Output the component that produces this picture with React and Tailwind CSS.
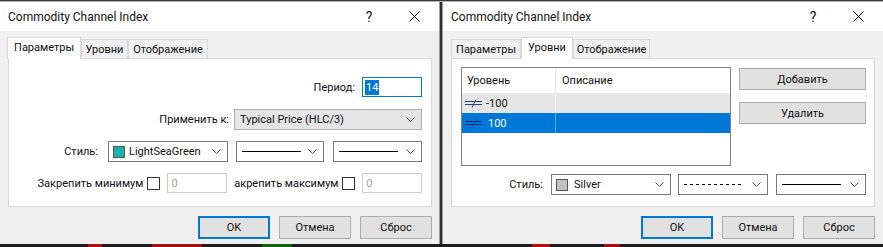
import React from "react";

function Chevron() {
  return (
    <svg width="9" height="5" viewBox="0 0 9 5" className="shrink-0">
      <path d="M0.5 0.5L4.5 4.5L8.5 0.5" fill="none" stroke="#555" strokeWidth="1" />
    </svg>
  );
}

function Select({ width, gray, children }) {
  return (
    <div
      className={`${width} h-[21px] flex items-center border pl-[4px] pr-[6px] ${
        gray ? "bg-[#e5e5e5] border-[#adadad]" : "bg-white border-[#7a7a7a]"
      }`}
    >
      <div className="flex-1 flex items-center min-w-0 whitespace-nowrap">{children}</div>
      <Chevron />
    </div>
  );
}

function Swatch({ color }) {
  return <span className={`w-[12px] h-[12px] border border-[#555] mr-[4px] shrink-0 ${color}`} />;
}

function SolidLine() {
  return <div className="w-[59px] h-px bg-black ml-[1px]" />;
}

function DashedLine() {
  return (
    <svg width="60" height="3" className="ml-[1px]">
      <line x1="0" y1="1.5" x2="60" y2="1.5" stroke="#000" strokeWidth="1" strokeDasharray="3 3" />
    </svg>
  );
}

function Checkbox() {
  return <div className="w-[13px] h-[13px] border border-[#333] bg-white shrink-0" />;
}

function Button({ children, primary }) {
  return (
    <div
      className={`h-[23px] w-[72px] flex items-center justify-center bg-[#e1e1e1] ${
        primary ? "border-2 border-[#0078d7]" : "border border-[#adadad]"
      }`}
    >
      {children}
    </div>
  );
}

function Tab({ label, selected, width }) {
  return selected ? (
    <div className={`${width} h-[22px] bg-white border border-b-0 border-[#d9d9d9] flex items-center justify-center pb-[2px]`}>
      {label}
    </div>
  ) : (
    <div className={`${width} h-[19px] mb-[1px] bg-[#f0f0f0] border border-b-0 border-[#d9d9d9] flex items-center justify-center`}>
      {label}
    </div>
  );
}

function Dialog({ className, tabs, children }) {
  return (
    <div className={`h-[242px] flex flex-col bg-[#f0f0f0] ${className}`}>
      <div className="h-[29px] bg-white flex items-center shrink-0">
        <span className="pl-[8px] flex-1 text-[12px]">Commodity Channel Index</span>
        <span className="w-[40px] text-center text-[14px] leading-none">?</span>
        <div className="w-[50px] flex justify-center">
          <svg width="11" height="11" viewBox="0 0 11 11">
            <path d="M0.5 0.5L10.5 10.5M10.5 0.5L0.5 10.5" stroke="#000" strokeWidth="1" />
          </svg>
        </div>
      </div>
      <div className="flex-1 flex flex-col pt-[6px] pl-[8px]">
        <div className="flex items-end h-[22px] -mb-px relative z-10">{tabs}</div>
        <div className="w-[424px] h-[149px] bg-white border border-[#d9d9d9]">{children}</div>
        <div className="w-[424px] flex justify-end gap-[9px] mt-[9px]">
          <Button primary>OK</Button>
          <Button>Отмена</Button>
          <Button>Сброс</Button>
        </div>
      </div>
    </div>
  );
}

function LevelIcon({ light }) {
  const c = light ? "#1b2a6b" : "#2b3a8a";
  return (
    <svg width="18" height="9" viewBox="0 0 18 9" className="shrink-0">
      <line x1="0" y1="2.5" x2="17" y2="2.5" stroke={c} strokeWidth="1" />
      <line x1="0" y1="5.5" x2="17" y2="5.5" stroke={c} strokeWidth="1" />
      <line x1="7" y1="8.5" x2="11" y2="0.5" stroke={c} strokeWidth="1" opacity={light ? 0.5 : 1} />
    </svg>
  );
}

function ParamsPanel() {
  return (
    <div className="flex flex-col pt-[18px] pr-[9px]">
      <div className="flex items-center justify-end h-[20px]">
        <span className="mr-[7px]">Период:</span>
        <div className="w-[60px] h-[20px] border border-[#0078d7] bg-white flex items-center pl-[2px]">
          <span className="bg-[#0078d7] text-white leading-[15px] px-px">14</span>
        </div>
      </div>
      <div className="flex items-center justify-end mt-[12px]">
        <span className="mr-[5px]">Применить к:</span>
        <Select width="w-[188px]" gray>
          <span className="pl-px">Typical Price (HLC/3)</span>
        </Select>
      </div>
      <div className="flex items-center mt-[11px]">
        <span className="w-[99px] text-right pr-[10px]">Стиль:</span>
        <Select width="w-[120px]">
          <Swatch color="bg-[#20b2aa]" />
          <span>LightSeaGreen</span>
        </Select>
        <div className="ml-[8px]">
          <Select width="w-[88px]">
            <SolidLine />
          </Select>
        </div>
        <div className="ml-[9px]">
          <Select width="w-[89px]">
            <SolidLine />
          </Select>
        </div>
      </div>
      <div className="flex items-center mt-[11px] h-[20px]">
        <span className="w-[135px] text-right whitespace-nowrap">Закрепить минимум</span>
        <div className="ml-[4px]">
          <Checkbox />
        </div>
        <div className="ml-[7px] w-[60px] h-[20px] border border-[#cccccc] bg-white flex items-center pl-[3px] text-[#a0a0a0]">
          0
        </div>
        <span className="ml-[7px] w-[104px] whitespace-nowrap">акрепить максимум</span>
        <div className="ml-[4px]">
          <Checkbox />
        </div>
        <div className="ml-[7px] w-[60px] h-[20px] border border-[#cccccc] bg-white flex items-center pl-[3px] text-[#a0a0a0]">
          0
        </div>
      </div>
    </div>
  );
}

function LevelsPanel() {
  return (
    <div className="flex flex-col pt-[8px] pl-[9px]">
      <div className="flex">
        <div className="w-[270px] h-[99px] border border-[#828282] bg-white flex flex-col">
          <div className="h-[26px] flex border-b border-[#e5e5e5] items-center">
            <span className="w-[94px] h-full flex items-center pl-[5px] border-r border-[#e5e5e5]">Уровень</span>
            <span className="pl-[6px]">Описание</span>
          </div>
          <div className="h-[19px] flex bg-[#e6e6e6]">
            <div className="w-[94px] flex items-center pl-[3px] border-r border-[#f4f4f4]">
              <LevelIcon />
              <span className="ml-[3px]">-100</span>
            </div>
          </div>
          <div className="h-[20px] flex bg-[#0078d7] text-white">
            <div className="w-[94px] flex items-center pl-[3px] border-r border-[#5aa6e6]">
              <LevelIcon light />
              <span className="ml-[5px]">100</span>
            </div>
          </div>
        </div>
        <div className="ml-[8px] pt-px flex flex-col">
          <div className="w-[127px] h-[22px] bg-[#e1e1e1] border border-[#adadad] flex items-center justify-center">
            Добавить
          </div>
          <div className="w-[127px] h-[22px] mt-[12px] bg-[#e1e1e1] border border-[#adadad] flex items-center justify-center">
            Удалить
          </div>
        </div>
      </div>
      <div className="flex items-center mt-[8px]">
        <span className="w-[90px] text-right pr-[8px]">Стиль:</span>
        <Select width="w-[120px]">
          <Swatch color="bg-[#c0c0c0]" />
          <span className="ml-[2px]">Silver</span>
        </Select>
        <div className="ml-[7px]">
          <Select width="w-[90px]">
            <DashedLine />
          </Select>
        </div>
        <div className="ml-[8px]">
          <Select width="w-[90px]">
            <SolidLine />
          </Select>
        </div>
      </div>
    </div>
  );
}

export default function App() {
  return (
    <div className="w-[883px] h-[247px] overflow-hidden bg-[#2a2a2a] font-['Segoe_UI',Roboto,sans-serif] text-[11px] text-[#111] leading-none">
      <div className="h-[2px] bg-[#b4b4b4] border-t border-[#3a3a3a]" />
      <div className="flex h-[242px]">
        <Dialog
          className="w-[440px] border-r border-[#9c9c9c]"
          tabs={
            <>
              <div className="-ml-px" />
              <Tab label="Параметры" selected width="w-[74px]" />
              <Tab label="Уровни" width="w-[47px]" />
              <Tab label="Отображение" width="w-[80px]" />
            </>
          }
        >
          <ParamsPanel />
        </Dialog>
        <div className="w-[2px] bg-[#303030]" />
        <Dialog
          className="flex-1 border-l border-[#9c9c9c]"
          tabs={
            <>
              <Tab label="Параметры" width="w-[70px]" />
              <Tab label="Уровни" selected width="w-[52px]" />
              <Tab label="Отображение" width="w-[77px]" />
            </>
          }
        >
          <LevelsPanel />
        </Dialog>
      </div>
      <div className="h-[3px] flex">
        <div className="w-[88px] bg-[#1e1e1e]" />
        <div className="w-[14px] bg-[#b01010]" />
        <div className="w-[50px] bg-[#1e1e1e]" />
        <div className="w-[50px] bg-[#a01010]" />
        <div className="w-[60px] bg-[#1e1e1e]" />
        <div className="w-[30px] bg-[#106010]" />
        <div className="w-[240px] bg-[#1e1e1e]" />
        <div className="w-[18px] bg-[#b01010]" />
        <div className="w-[54px] bg-[#1e1e1e]" />
        <div className="w-[16px] bg-[#a01010]" />
        <div className="flex-1 bg-[#1e1e1e]" />
      </div>
    </div>
  );
}
